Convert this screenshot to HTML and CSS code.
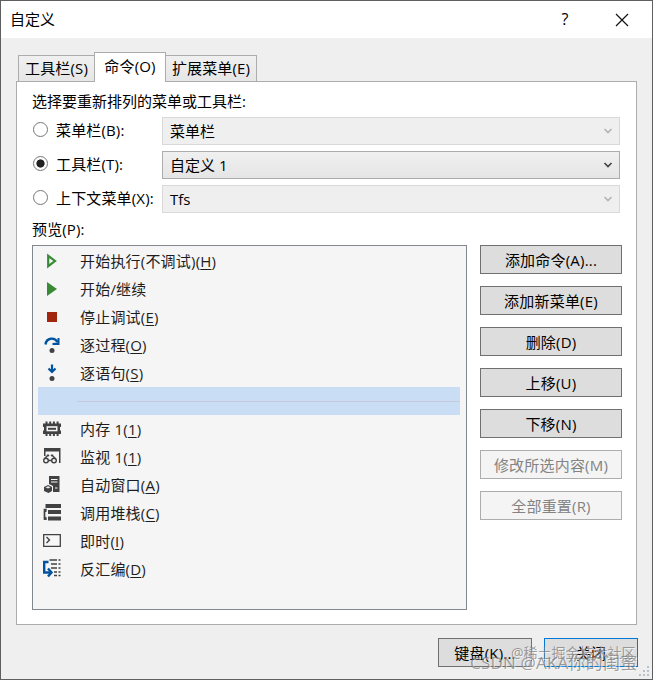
FILE: index.html
```html
<!DOCTYPE html>
<html lang="zh-CN">
<head>
<meta charset="utf-8">
<title>自定义</title>
<link rel="stylesheet" href="styles.css">
</head>
<body>
<div class="dialog">
  <header class="titlebar">
    <span class="title">自定义</span>
    <span class="help">?</span>
    <svg class="close" width="14" height="14" viewBox="0 0 14 14"><path d="M1 1L13 13M13 1L1 13"/></svg>
  </header>
  <nav class="tabs">
    <div class="tab first">工具栏(S)</div>
    <div class="tab active">命令(O)</div>
    <div class="tab last">扩展菜单(E)</div>
  </nav>
  <main class="panel">
    <div class="label">选择要重新排列的菜单或工具栏:</div>
    <div class="choices">
      <div class="choice"><i class="radio"></i><span class="name">菜单栏(B):</span><div class="combo disabled">菜单栏<svg width="10" height="8" viewBox="0 0 10 8"><path d="M1.500 2L5 5.500L8.500 2"/></svg></div></div>
      <div class="choice"><i class="radio checked"></i><span class="name">工具栏(T):</span><div class="combo">自定义 1<svg width="10" height="8" viewBox="0 0 10 8"><path d="M1.500 2L5 5.500L8.500 2"/></svg></div></div>
      <div class="choice"><i class="radio"></i><span class="name">上下文菜单(X):</span><div class="combo disabled">Tfs<svg width="10" height="8" viewBox="0 0 10 8"><path d="M1.500 2L5 5.500L8.500 2"/></svg></div></div>
    </div>
    <div class="label preview">预览(P):</div>
    <div class="content">
      <div class="list">
        <div class="item"><svg class="icon" viewBox="0 0 20 20"><path d="M6.200 4.800V15.200L13 10Z" fill="none" stroke="#388a34" stroke-width="2.200"/></svg><span>开始执行(不调试)(<u>H</u>)</span></div>
        <div class="item"><svg class="icon" viewBox="0 0 20 20"><path d="M5 3V17L15 10Z" fill="#388a34"/></svg><span>开始/继续</span></div>
        <div class="item"><svg class="icon" viewBox="0 0 20 20"><path d="M5 5H15V15H5Z" fill="#a1260d"/></svg><span>停止调试(<u>E</u>)</span></div>
        <div class="item"><svg class="icon" viewBox="0 0 20 20"><path d="M3.500 9.500C4.500 2.500 12.500 2 15.500 7" fill="none" stroke="#00539c" stroke-width="2.400"/><path d="M17.500 3V10H10.500V8L15.500 7.500V3Z" fill="#00539c"/><circle cx="10" cy="15.500" r="2.500" fill="#424242"/></svg><span>逐过程(<u>O</u>)</span></div>
        <div class="item"><svg class="icon" viewBox="0 0 20 20"><path d="M10 1.500V9M6.500 5.500L10 9L13.500 5.500" fill="none" stroke="#00539c" stroke-width="2.200"/><circle cx="10" cy="15.500" r="2.500" fill="#424242"/></svg><span>逐语句(<u>S</u>)</span></div>
        <div class="item selected"><i class="separator"></i></div>
        <div class="item"><svg class="icon" viewBox="0 0 20 20"><path d="M4.500 2.500V17M8.200 2.500V17M11.900 2.500V17M15.600 2.500V17" stroke="#424242" stroke-width="2"/><path d="M1 4.500H19V8H18V11.500H19V15H1V11.500H2V8H1Z" fill="#424242"/><path d="M4.500 7.200H15.500V12.300H4.500Z" fill="#f5f5f5"/><path d="M6 8.800H14V10.800H6Z" fill="#424242"/></svg><span>内存 1(<u>1</u>)</span></div>
        <div class="item"><svg class="icon" viewBox="0 0 20 20"><path d="M2 1H18.500V16H17V4.500H3.500V9H2Z" fill="#424242"/><g fill="none" stroke="#424242" stroke-width="1.400"><circle cx="4" cy="13.500" r="2.300"/><circle cx="12" cy="13.500" r="2.300"/><path d="M6.300 13.500H9.700M2.500 11.800L6 8L7 9M13.500 11.800L10 8L9 9"/></g></svg><span>监视 1(<u>1</u>)</span></div>
        <div class="item"><svg class="icon" viewBox="0 0 20 20"><path d="M7 1H17.500V17H11V11L7 9Z" fill="#424242"/><path d="M9 4.500H15.500M9 7H15.500M13 13H15.500" stroke="#f5f5f5"/><path d="M2 12L6 10L10 12V16L6.500 18L2 16Z" fill="#424242"/><path d="M3.500 12.300L6 11.200L8.500 12.300L6 13.500Z" fill="#eee"/></svg><span>自动窗口(<u>A</u>)</span></div>
        <div class="item"><svg class="icon" viewBox="0 0 20 20"><path d="M3.500 1H19V5H3.500ZM6 7H19V11H6ZM6 13.500H19V17.500H6Z" fill="#424242"/><path d="M4.500 6.500H2.500V16H4.500" fill="none" stroke="#424242" stroke-width="1.700"/><path d="M2 6H4.500V9H2ZM2 14H4.500V17H2Z" fill="#424242"/></svg><span>调用堆栈(<u>C</u>)</span></div>
        <div class="item"><svg class="icon" viewBox="0 0 20 20"><path d="M1.700 3.700H18.300V15.300H1.700Z" fill="#f7f7f7" stroke="#424242" stroke-width="1.300"/><path d="M4.500 6L7.500 9L4.500 12" fill="none" stroke="#424242" stroke-width="1.400"/></svg><span>即时(<u>I</u>)</span></div>
        <div class="item"><svg class="icon" viewBox="0 0 20 20"><path d="M6.500 3H2.200V13.500H9" fill="none" stroke="#00539c" stroke-width="2.400"/><path d="M6 9.500L9.500 13.500L6 17.500" fill="none" stroke="#00539c" stroke-width="2.400"/><path d="M7.500 1H15M9 5H15M9 9H15M12 13H15M12 16.500H15" stroke="#424242" stroke-width="1.300"/><path d="M16.500 1H18.500M16.500 5H18.500M16.500 9H18.500M16.500 13H18.500M16.500 16.500H18.500" stroke="#424242" stroke-width="1.300"/></svg><span>反汇编(<u>D</u>)</span></div>
      </div>
      <div class="actions">
        <div class="button">添加命令(A)...</div>
        <div class="button">添加新菜单(E)</div>
        <div class="button">删除(D)</div>
        <div class="button">上移(U)</div>
        <div class="button">下移(N)</div>
        <div class="button off">修改所选内容(M)</div>
        <div class="button off">全部重置(R)</div>
      </div>
    </div>
  </main>
  <footer class="footer">
    <div class="button">键盘(K)...</div>
    <div class="button default">关闭</div>
  </footer>
  <svg class="grip" width="14" height="14" viewBox="0 0 14 14"><path d="M10 1h2v2h-2zM6 5h2v2h-2zM10 5h2v2h-2zM2 9h2v2h-2zM6 9h2v2h-2zM10 9h2v2h-2z" fill="#b7c0cb"/></svg>
  <div class="mark community">@稀土掘金技术社区</div>
  <div class="mark author">CSDN @AKA你的闺蜜</div>
</div>
</body>
</html>
```

FILE: styles.css
```css
* { box-sizing: border-box; }
body {
  margin: 0;
  font: 15px/20px "Open Sans", "Noto Sans CJK SC", sans-serif;
  color: #000;
}
.dialog {
  position: relative;
  width: 653px;
  height: 680px;
  border: 1px solid #5f5f61;
  background: #efefef;
  overflow: hidden;
  white-space: nowrap;
}
.titlebar {
  display: flex;
  align-items: center;
  height: 37px;
  padding: 0 23px 0 9px;
  background: #fff;
}
.title { flex: 1; line-height: 18px; padding-bottom: 2px; }
.help { width: 10px; margin-right: 45px; padding-bottom: 2px; text-align: center; font-size: 16px; }
.close { fill: none; stroke: #111; stroke-width: 1.2; }
.tabs {
  position: relative;
  z-index: 1;
  display: flex;
  align-items: flex-end;
  height: 43px;
  padding-left: 17px;
}
.tab {
  height: 27px;
  border: 1px solid #acacac;
  background: linear-gradient(#f0f0f0, #e6e6e6);
  text-align: center;
  line-height: 24px;
  letter-spacing: .15px;
}
.tab.first { width: 76px; border-right: 0; }
.tab.active { width: 72px; height: 29px; border-bottom: 0; background: #fff; line-height: 26px; margin-bottom: -1px; height: 30px; }
.tab.last { width: 91px; border-left: 0; }
.panel {
  width: 621px;
  height: 544px;
  margin-left: 15px;
  border: 1px solid #acacac;
  background: #fff;
  padding: 9px 14px 0 15px;
}
.tab.first, .tab.last { margin-bottom: -1px; }
.panel { margin-top: 0; }
.choices { display: grid; gap: 6px; margin-top: 6px; }
.choice { display: flex; align-items: center; height: 28px; }
.radio {
  width: 15px;
  height: 15px;
  margin: 0 8px 3px 1px;
  border: 1px solid #777;
  border-radius: 50%;
  background: #fff;
}
.radio.checked { background: radial-gradient(circle, #222 3.700px, #fff 4.500px); }
.name { width: 106px; padding-bottom: 2px; letter-spacing: .15px; }
.combo {
  display: flex;
  align-items: center;
  justify-content: space-between;
  width: 458px;
  height: 28px;
  padding: 0 6px 0 7px;
  border: 1px solid #acacac;
  background: linear-gradient(#f0f0f0, #e5e5e5);
}
.combo svg { fill: none; stroke: #444; stroke-width: 1.700; }
.combo.disabled { border-color: #d9d9d9; background: #efefef; }
.combo.disabled svg { stroke: #b5b5b5; }
.preview { margin-top: 6px; letter-spacing: .15px; }
.content { display: flex; justify-content: space-between; margin-top: 6px; }
.list {
  width: 435px;
  height: 365px;
  padding: 1px 6px 0 5px;
  border: 1px solid #828790;
  background: #f5f5f5;
  color: #1e1e1e;
  letter-spacing: .2px;
}
.item { display: flex; align-items: center; height: 28px; padding-left: 4px; }
.icon { width: 20px; height: 20px; margin-right: 18px; }
.item u { text-underline-offset: 2px; text-decoration-thickness: 1px; }
.item.selected { background: #c9def5; }
.separator { flex: 1; height: 1px; margin-left: 35px; background: #c8c8dc; }
.actions { display: grid; gap: 12px; align-content: start; }
.button {
  width: 142px;
  height: 29px;
  border: 1px solid #707070;
  background: #ddd;
  text-align: center;
  line-height: 28px;
  letter-spacing: .2px;
}
.button.off { border-color: #adadad; background: #f4f4f4; color: #838383; }
.footer { display: flex; justify-content: flex-end; gap: 12px; padding: 13px 14px 0 0; }
.footer .button { width: 94px; }
.footer .button.default { border-color: #0078d7; }
.grip { position: absolute; right: 1px; bottom: 0; }
.mark { position: absolute; color: rgba(120, 120, 120, .7); text-shadow: 1px 1px 0 rgba(255, 255, 255, .6); }
.community { left: 510px; top: 642px; font-size: 14px; }
.author { left: 469px; top: 652px; font-size: 17px; letter-spacing: .2px; }
```
